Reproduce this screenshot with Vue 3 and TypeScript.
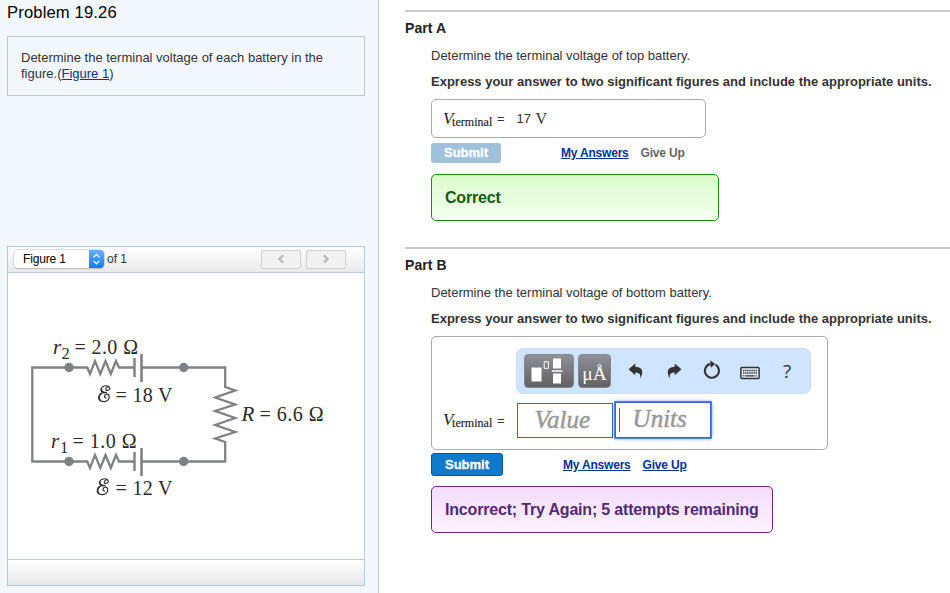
<script setup lang="ts">
import { ref } from 'vue'

interface Part {
  id: string
  prompt: string
  solved: boolean
  feedback: string
}

const parts: Part[] = [
  { id: 'A', prompt: 'Determine the terminal voltage of top battery.', solved: true, feedback: 'Correct' },
  { id: 'B', prompt: 'Determine the terminal voltage of bottom battery.', solved: false, feedback: 'Incorrect; Try Again; 5 attempts remaining' },
]
const instruction = 'Express your answer to two significant figures and include the appropriate units.'
const figure = ref('Figure 1')
</script>

<template>
  <div class="page">
    <aside class="side">
      <h1>Problem 19.26</h1>
      <div class="statement">
        Determine the terminal voltage of each battery in the figure.(<a href="#">Figure 1</a>)
      </div>
      <section class="figure">
        <header class="fig-bar">
          <div class="select">
            <span class="select-label">{{ figure }}</span>
            <span class="select-arrows">
              <svg width="15" height="18" viewBox="0 0 15 18"><path d="M4.600 7.300 7.500 4.400l2.900 2.900M4.600 10.900l2.900 2.900 2.900-2.900" fill="none" stroke="#fff" stroke-width="1.300" /></svg>
            </span>
          </div>
          <span class="of">of 1</span>
          <button class="nav" aria-label="Previous">
            <svg width="8" height="10" viewBox="0 0 8 10"><path d="M6.200 1.400 2.400 5l3.800 3.600" fill="none" stroke="#b9b9b9" stroke-width="2.200" /></svg>
          </button>
          <button class="nav" aria-label="Next">
            <svg width="8" height="10" viewBox="0 0 8 10"><path d="M1.800 1.400 5.600 5 1.800 8.600" fill="none" stroke="#b9b9b9" stroke-width="2.200" /></svg>
          </button>
        </header>
        <svg class="circuit" width="356" height="286" viewBox="8 273 356 286">
          <g fill="none" stroke="#808184" stroke-width="2.300">
            <path d="M134.500 367.500H119L116 361l-5.200 13L105.500 361l-5.200 13L95 361l-5 13-2.700-6.500H32.300v94h55L90 468l5-13 5.300 13 5.200-13 5.300 13L116 455l3 6.500h15.500" transform="translate(0 0)" />
            <path d="M141.500 367.500H225.200V387l10 3.500-20 7 20 7-20 6.500 20 7-20 7 20 7-20 6.500 10 3.500V461.500H141.500" />
            <path d="M134.500 358v19M134.500 452v19" stroke-width="2.400" />
            <path d="M141.500 354v28M141.500 448v28" stroke-width="2.600" />
          </g>
          <g fill="#808184">
            <circle cx="69" cy="367.500" r="4.700" />
            <circle cx="183.700" cy="367.500" r="4.700" />
            <circle cx="69" cy="461.500" r="4.700" />
            <circle cx="183.700" cy="461.500" r="4.700" />
          </g>
          <g class="labels">
            <text x="53" y="354" class="it">r</text>
            <text x="61.500" y="359" class="sub">2</text>
            <text x="74.500" y="354" textLength="63.500">= 2.0 Ω</text>
            <text x="51" y="448" class="it">r</text>
            <text x="60" y="453" class="sub">1</text>
            <text x="72.500" y="448" textLength="64">= 1.0 Ω</text>
            <text x="115.500" y="402" textLength="57">= 18 V</text>
            <text x="115.500" y="495" textLength="57">= 12 V</text>
            <text x="241.500" y="421" class="it">R</text>
            <text x="259.500" y="421" textLength="64">= 6.6 Ω</text>
          </g>
          <g fill="none" stroke="#2b2a2c" stroke-linecap="round">
            <g v-for="(p, i) in [[97, 385], [95.5, 478]]" :key="i" :transform="`translate(${p[0]} ${p[1]})`">
              <path d="M9 5.200C7.800 3 10.900.900 12.500 2.300c1.300 1.700-.8 3.700-3.500 2.900M12.500 2.300C11-.2 4 .6 4.200 4.700c.1 2.500 2.600 3.300 5.200 2.800" stroke-width="1.100" />
              <path d="M9.400 7.500C5 7 1.600 9.500 1.700 12.800c.1 4 6.600 5 9.400 2 2.200-2.600 1-6.200-1.600-5.700-2.400.5-2.700 3.900-.5 4" stroke-width="1.200" />
              <path d="M4.300 3.800c-.2 2.200 1 3.300 2.800 3.700M4.300 8.500C2 10.100 1.300 13 3.200 15.200" stroke-width="1.500" />
            </g>
          </g>
        </svg>
        <footer class="fig-foot"></footer>
      </section>
    </aside>

    <main>
      <section v-for="part in parts" :key="part.id" class="part" :class="{ open: !part.solved }">
        <h2>Part {{ part.id }}</h2>
        <div class="body">
          <p class="prompt">{{ part.prompt }}</p>
          <p class="express">{{ instruction }}</p>

          <div v-if="part.solved" class="answer done">
            <span class="var"><i>V</i><span class="vsub">terminal</span></span>
            <span class="eq">=</span>
            <span class="num">17</span><span class="unit">V</span>
          </div>
          <div v-else class="answer editor">
            <div class="tools">
              <span class="key wide">
                <svg width="48" height="32" viewBox="0 0 48 32">
                  <path d="M6.500 12.500h10v14h-10zM28 3.500h8v10h-8zM28 18.500h8v10h-8zM27 15.300h10.500v1.400H27z" fill="#fff" />
                  <path d="M19.200 6.700h4.200v6.600h-4.200z" fill="none" stroke="#fff" />
                </svg>
              </span>
              <span class="key units">μÅ</span>
              <svg class="tool undo" width="16" height="18" viewBox="0 0 16 18"><path d="M.5 7.300 7.300 1.600v3.200c6.900.2 9 5 4.700 12 1-4.600-.4-6.200-4.700-6.300v2.800z" fill="#333" /></svg>
              <svg class="tool redo" width="16" height="18" viewBox="0 0 16 18"><path d="M15.500 7.300 8.700 1.600v3.200C1.800 5-.3 9.800 4 16.800c-1-4.600.4-6.200 4.700-6.300v2.800z" fill="#333" /></svg>
              <svg class="tool reset" width="18" height="20" viewBox="0 0 18 20"><path d="M12.400 4.700A7 7 0 1 1 7.600 3.900" fill="none" stroke="#333" stroke-width="2.100" /><path d="m7.300.3 4.900 3.600-4.400 3.900z" fill="#333" /></svg>
              <svg class="tool keyboard" width="20" height="14" viewBox="0 0 20 14"><rect x=".9" y="1.400" width="18.200" height="11" rx=".8" fill="#e6f1fc" stroke="#333" stroke-width="1.500" /><path d="M3 4.500h14M3 7h14" stroke="#333" stroke-width="1.300" stroke-dasharray="1.400 .7" /><path d="M3 9.800h1.500M5.500 9.800h9M15.500 9.800H17" stroke="#333" stroke-width="1.300" /></svg>
              <span class="help">?</span>
            </div>
            <div class="entry">
              <span class="var"><i>V</i><span class="vsub">terminal</span></span>
              <span class="eq">=</span>
              <div class="field">Value</div>
              <div class="field focus"><span class="caret"></span>Units</div>
            </div>
          </div>

          <div class="actions">
            <button class="submit">Submit</button>
            <a href="#" class="mine">My Answers</a>
            <a v-if="!part.solved" href="#" class="give">Give Up</a>
            <span v-else class="give">Give Up</span>
          </div>
          <div class="feedback">{{ part.feedback }}</div>
        </div>
      </section>
    </main>
  </div>
</template>

<style>
body {
  background: #fff;
  overflow: hidden;
}
</style>

<style scoped>
* {
  box-sizing: border-box;
}
.page {
  display: flex;
  width: 950px;
  height: 593px;
  overflow: hidden;
  font-family: 'Liberation Sans', Arial, sans-serif;
  font-size: 13px;
  color: #333;
}
a {
  color: #003399;
}
.side {
  width: 379px;
  flex: none;
  padding: 2px 13px 0 7px;
  background: #f3f8ff;
  border-right: 1px solid #b7cbdf;
}
h1 {
  margin: 0;
  height: 34px;
  font-size: 16.6px;
  line-height: 21px;
  letter-spacing: 0.15px;
  font-weight: 400;
  color: #000;
}
.statement {
  height: 60px;
  padding: 13px;
  border: 1px solid #b7cbdc;
  line-height: 16px;
}
.figure {
  margin-top: 150px;
  height: 340px;
  border: 1px solid #b7cbdc;
  background: #fff;
}
.fig-bar {
  display: flex;
  align-items: center;
  height: 26px;
  padding: 0 18px 1px 6px;
  border-bottom: 1px solid #b7cbdc;
  background: linear-gradient(#fff, #e9e9e9);
}
.select {
  display: flex;
  width: 90px;
  height: 18px;
  border-radius: 4px;
  background: #fff;
  box-shadow: 0 0 0 0.5px #bbb, 0 1px 1px #bbb;
  overflow: hidden;
}
.select-label {
  flex: 1;
  padding-left: 9px;
  font-size: 12px;
  line-height: 18px;
  letter-spacing: -0.15px;
  color: #000;
}
.select-arrows {
  width: 15px;
  background: linear-gradient(#69b1fa, #0d7bff);
}
.select-arrows svg {
  display: block;
}
.of {
  flex: 1;
  padding-left: 3px;
  font-size: 12px;
}
.nav {
  display: flex;
  align-items: center;
  justify-content: center;
  width: 40px;
  height: 19px;
  margin-left: 5px;
  padding: 0;
  border: 1px solid #d0d0d0;
  border-radius: 2px;
  background: #f1f1f1;
}
.circuit {
  display: block;
}
.labels text {
  font-family: 'Liberation Serif', serif;
  font-size: 20px;
  fill: #2b2a2c;
}
.labels .it {
  font-style: italic;
  font-size: 21px;
}
.labels .sub {
  font-size: 16.5px;
}
.fig-foot {
  height: 26px;
  border-top: 1px solid #b7cbdc;
  background: linear-gradient(#fff, #e7e7e7);
}
main {
  flex: 1;
  padding: 10px 0 0 26px;
}
.part {
  height: 237px;
  border-top: 2px solid #ccc;
}
h2 {
  margin: 0;
  padding-top: 8px;
  font-size: 14px;
  line-height: 16px;
  letter-spacing: 0.1px;
  color: #222;
}
.body {
  padding-left: 26px;
}
p {
  margin: 0;
  line-height: 16px;
  white-space: nowrap;
}
.prompt {
  margin-top: 12px;
}
.express {
  margin-top: 10px;
  font-weight: 700;
}
.answer {
  margin-top: 9px;
  border: 1px solid #aaa;
  border-radius: 5px;
}
.done {
  display: flex;
  width: 275px;
  height: 39px;
  padding: 9px 0 0 11px;
}
.var {
  display: flex;
  width: 54px;
  height: 20px;
  font-family: 'Liberation Serif', serif;
  color: #222;
}
.var i {
  width: 9px;
  font-size: 17px;
  line-height: 19px;
}
.vsub {
  font-size: 12px;
  line-height: 27px;
  letter-spacing: 0.05px;
  -webkit-text-stroke: 0.15px #222;
}
.eq {
  font-size: 13px;
  line-height: 19px;
}
.num {
  width: 19px;
  margin-left: 12px;
  font-size: 13px;
  line-height: 19px;
}
.unit {
  font-family: 'Liberation Serif', serif;
  font-size: 16px;
  line-height: 19px;
}
.editor {
  width: 397px;
  height: 114px;
  padding: 11px 0 0 11px;
}
.tools {
  display: flex;
  align-items: center;
  width: 295px;
  height: 46px;
  margin-left: 73px;
  padding: 0 0 0 7px;
  border: 1px solid #d6dde4;
  border-radius: 7px;
  background: #cfe5ff;
}
.key {
  flex: none;
  height: 34px;
  border: 1px solid #87878f;
  border-radius: 4px;
  background: linear-gradient(#8f8f97, #626264);
  color: #fff;
}
.wide {
  width: 50px;
}
.units {
  width: 33px;
  margin-left: 4px;
  font-family: 'Liberation Serif', serif;
  font-size: 19.5px;
  line-height: 37px;
  text-align: center;
}
.tool {
  flex: none;
}
.undo {
  margin-left: 17px;
}
.redo {
  margin-left: 22px;
}
.reset {
  margin: 0 0 2px 21px;
}
.keyboard {
  margin: 4px 0 0 19px;
}
.help {
  margin-left: 23px;
  font-family: 'Open Sans', sans-serif;
  font-size: 19px;
  color: #333;
}
.entry {
  display: flex;
  align-items: center;
  height: 36px;
  margin-top: 8px;
}
.field {
  width: 96px;
  height: 35px;
  margin-left: 12px;
  padding-left: 17px;
  border: 1px solid #3366cc;
  font: italic 25px/32px 'Liberation Serif', serif;
  color: #999;
  -webkit-text-stroke: 0.5px #999;
}
.focus {
  position: relative;
  width: 96px;
  height: 36px;
  margin-left: 2px;
  box-shadow: 0 0 0 1px #5a83de, 0 0 4px #3366cc;
}
.caret {
  position: absolute;
  left: 3px;
  top: 5px;
  width: 1px;
  height: 24px;
  background: #3366cc;
}
.actions {
  display: flex;
  align-items: flex-start;
  height: 20px;
  margin-top: 5px;
  font-size: 12px;
  font-weight: 700;
  line-height: 20px;
  letter-spacing: -0.2px;
}
.submit {
  width: 70px;
  height: 20px;
  padding: 0;
  border: 0;
  border-radius: 3px;
  background: #9fc1dc;
  color: #fff;
  font: 700 13px/18px 'Liberation Sans', sans-serif;
  letter-spacing: 0;
  -webkit-text-stroke: 0.3px #fff;
}
.mine {
  margin-left: 60px;
}
.give {
  margin-left: 12px;
}
span.give {
  color: #666;
}
.open .actions {
  height: 23px;
  margin-top: 3px;
  line-height: 24px;
}
.open .submit {
  width: 72px;
  height: 23px;
  border: 1px solid #0b5595;
  background: #0f7acb;
}
.feedback {
  width: 288px;
  height: 47px;
  margin-top: 11px;
  padding-left: 13px;
  border: 1px solid #149411;
  border-radius: 5px;
  background: linear-gradient(#dcfbca, #f3fff0);
  color: #0e5c13;
  font-size: 16px;
  font-weight: 700;
  line-height: 45px;
  letter-spacing: -0.18px;
  white-space: nowrap;
}
.open .feedback {
  width: 342px;
  margin-top: 10px;
  border-color: #6b2b85;
  background: linear-gradient(#f3dcfe, #fdf3ff);
  color: #532a78;
}
</style>
